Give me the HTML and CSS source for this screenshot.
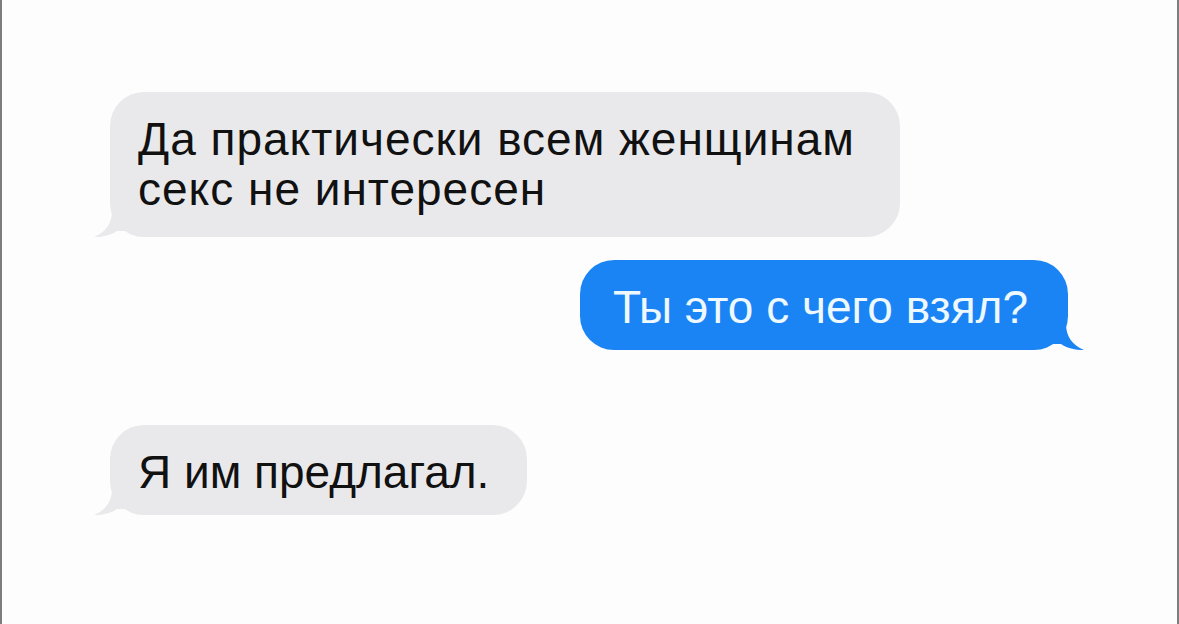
FILE: index.html
```html
<!DOCTYPE html>
<html lang="ru">
<head>
    <meta charset="UTF-8">
    <meta name="viewport" content="width=device-width, initial-scale=1.0">
    <title>Сообщения</title>
    <link rel="stylesheet" href="styles.css">
</head>
<body>
    <main class="chat">
        <div class="msg received first">
            <p>Да практически всем женщинам<br>секс не интересен</p>
            <svg class="tail" viewBox="0 0 32 26" aria-hidden="true">
                <path d="M18 0 C18 12 12 21 0 26 C9 26 17 24 23 20 L32 20 L32 0 Z"/>
            </svg>
        </div>
        <div class="msg sent">
            <p>Ты это с чего взял?</p>
            <svg class="tail" viewBox="0 0 32 26" aria-hidden="true">
                <path d="M14 0 C14 12 20 21 32 26 C23 26 15 24 9 20 L0 20 L0 0 Z"/>
            </svg>
        </div>
        <div class="msg received last">
            <p>Я им предлагал.</p>
            <svg class="tail" viewBox="0 0 32 26" aria-hidden="true">
                <path d="M18 0 C18 12 12 21 0 26 C9 26 17 24 23 20 L32 20 L32 0 Z"/>
            </svg>
        </div>
    </main>
</body>
</html>
```

FILE: styles.css
```css
html, body {
    height: 100%;
}

body {
    margin: 0;
    background-color: #fdfdfd;
    font-family: "Liberation Sans", Arial, sans-serif;
    border-left: 2px solid #7d7d7d;
    border-right: 2px solid #7d7d7d;
    box-sizing: border-box;
}

.chat {
    display: flex;
    flex-direction: column;
    align-items: flex-start;
    padding: 92px 109px 0 108px;
}

.msg {
    position: relative;
    border-radius: 34px;
}

.msg p {
    margin: 0;
    font-size: 46px;
    line-height: 50px;
    padding: 22px 38px 18px 28px;
}

.first p {
    letter-spacing: 1px;
    padding-bottom: 23px;
    padding-right: 45px;
}

.received {
    background-color: #e9e9eb;
    color: #111;
}

.received .tail {
    position: absolute;
    left: -16px;
    bottom: 0;
    width: 32px;
    height: 26px;
    fill: #e9e9eb;
}

.sent {
    align-self: flex-end;
    margin-top: 23px;
    background-color: #1b84f4;
    color: #eef8ff;
}

.sent p {
    padding-left: 33px;
    padding-right: 40px;
}

.sent .tail {
    position: absolute;
    right: -16px;
    bottom: 0;
    width: 32px;
    height: 26px;
    fill: #1b84f4;
}

.last {
    margin-top: 75px;
}
```
